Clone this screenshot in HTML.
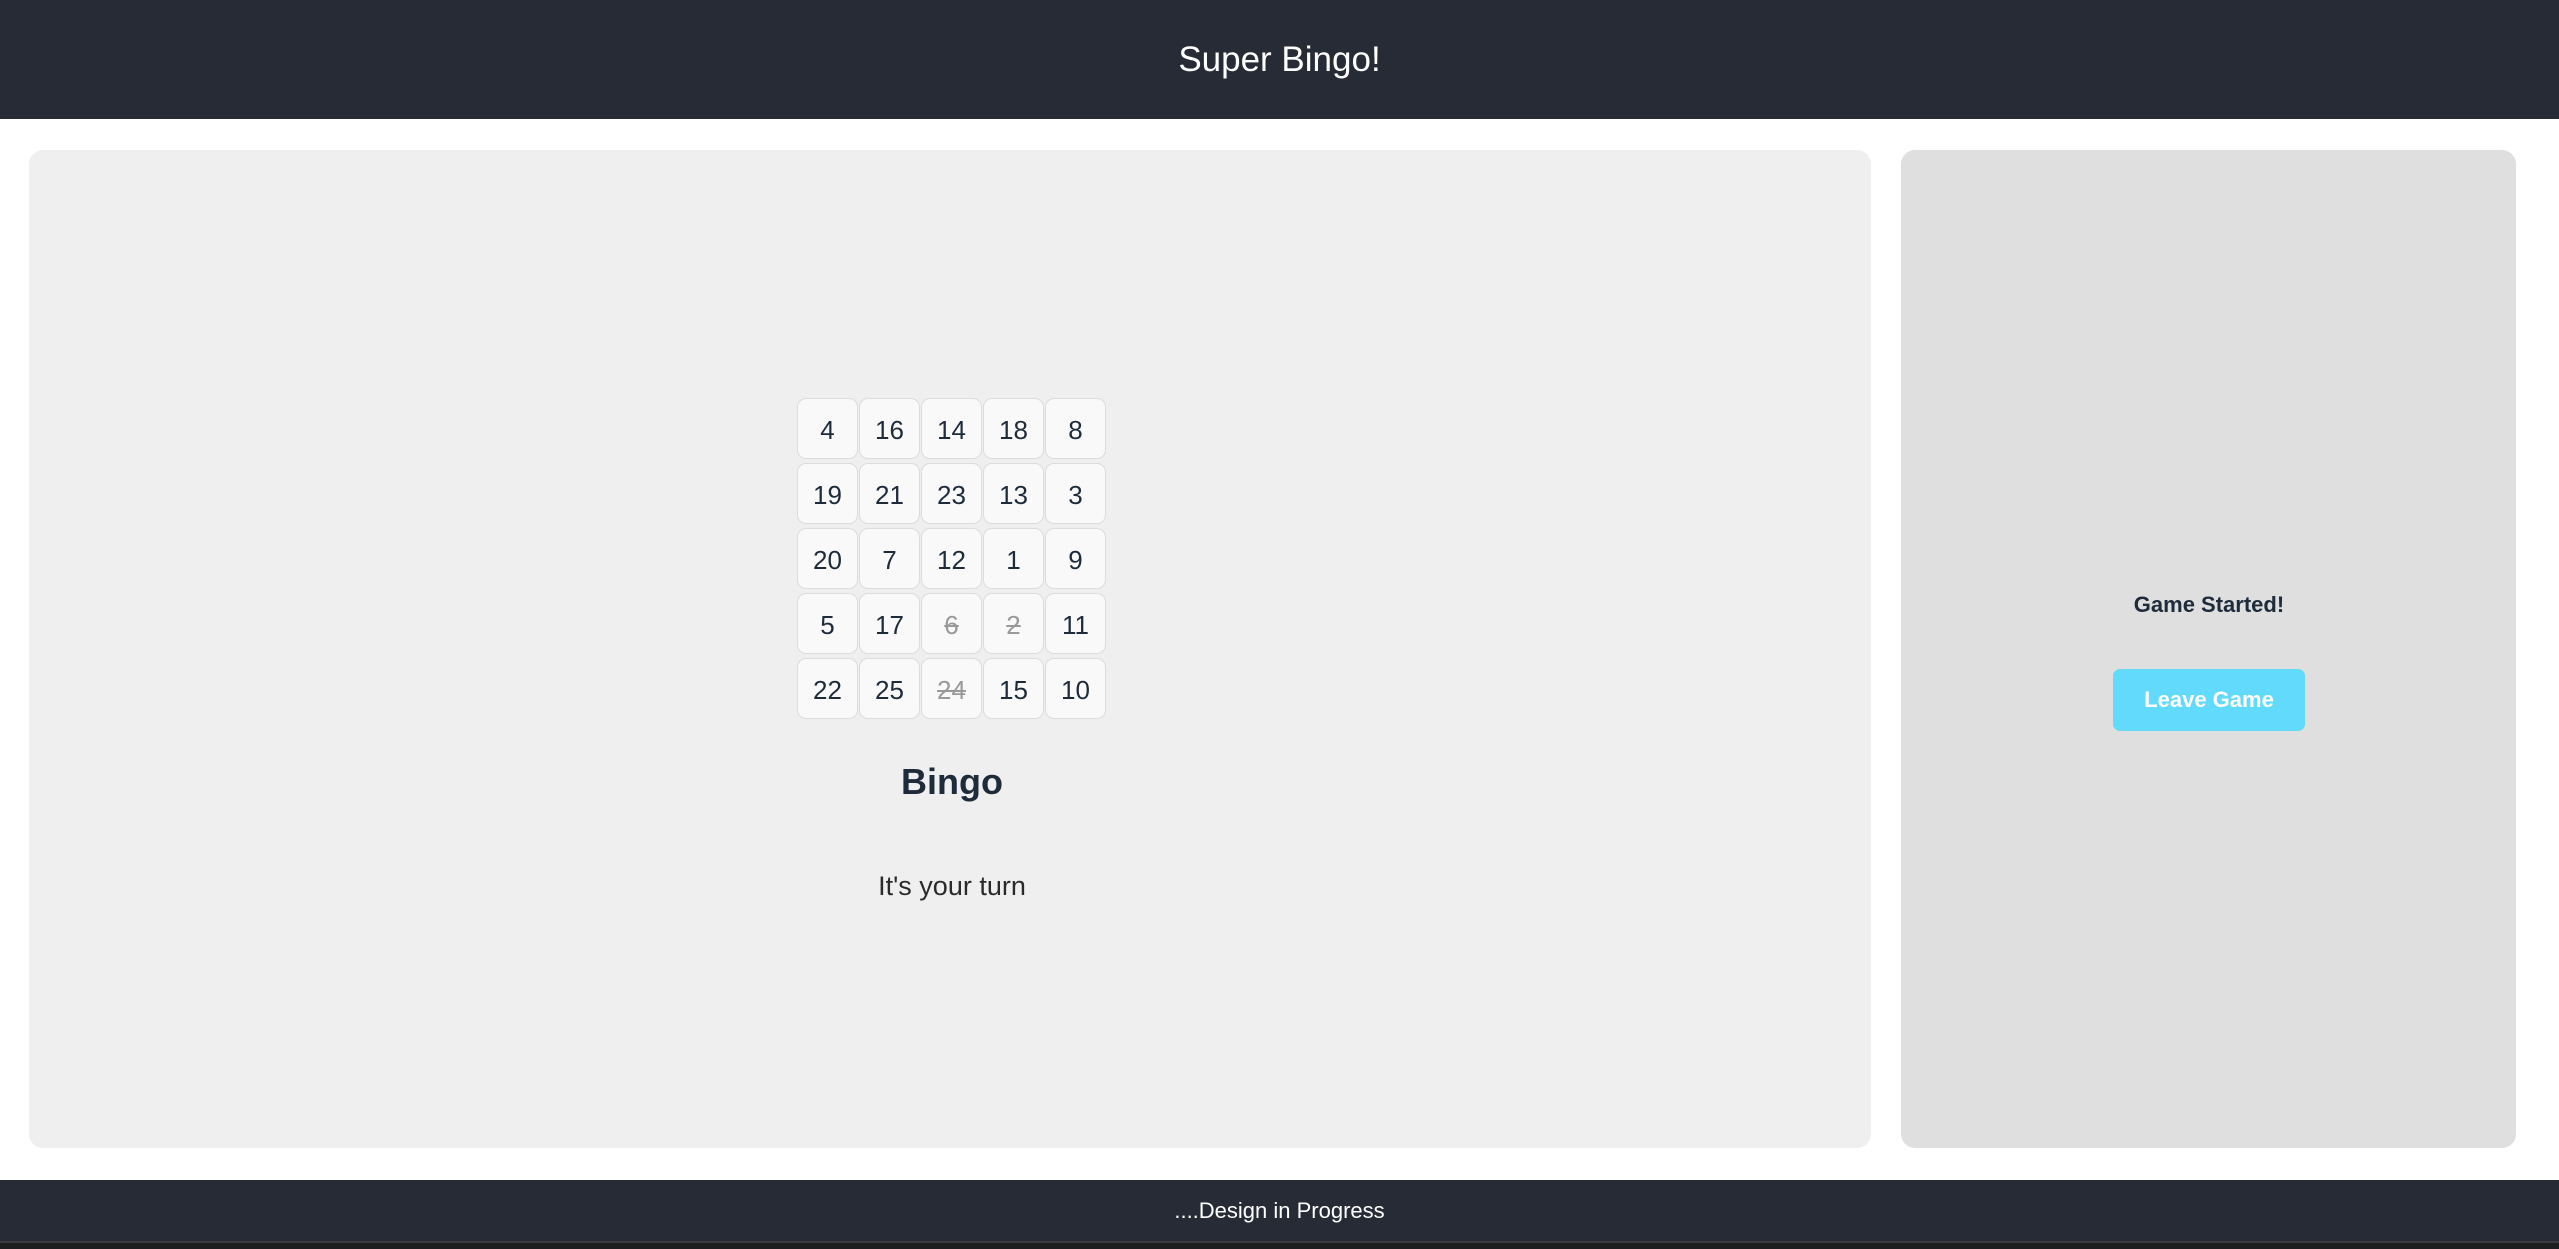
<!DOCTYPE html>
<html><head><meta charset="utf-8"><style>
*{margin:0;padding:0;box-sizing:border-box}
html,body{width:2559px;height:1249px;overflow:hidden;background:#fff;font-family:"Liberation Sans",sans-serif}
.hdr{position:absolute;left:0;top:0;width:2559px;height:119px;background:#272b35;color:#fff;font-size:35px;text-align:center;line-height:119px}
.left{position:absolute;left:29px;top:150px;width:1842px;height:998px;background:#efefef;border-radius:14px}
.right{position:absolute;left:1901px;top:150px;width:615px;height:998px;background:#dfdfdf;border-radius:14px}
.c{position:absolute;width:61px;height:61px;background:#f9f9f9;border:1px solid #dcdcdc;border-radius:9px;color:#1e2b3b;font-size:26px;text-align:center;line-height:59px;padding-top:2px}
.c.x{color:#999;text-decoration:line-through}
.t{position:absolute;text-align:center;color:#1e2b3b}
.foot{position:absolute;left:0;top:1180px;width:2559px;height:61px;background:#272b35;color:#fff;font-size:22px;text-align:center;line-height:61px}
.strip{position:absolute;left:0;top:1241px;width:2559px;height:8px;background:#1d1e20;border-top:2px solid #3a3c40}
.btn{position:absolute;left:2113px;top:669px;width:192px;height:62px;background:#62dafc;border-radius:7px;color:#fff;font-weight:bold;font-size:22px;text-align:center;line-height:62px}
</style></head><body>
<div class="hdr">Super Bingo!</div>
<div class="left"></div>
<div class="right"></div>
<div class="c" style="left:797px;top:398px">4</div><div class="c" style="left:859px;top:398px">16</div><div class="c" style="left:921px;top:398px">14</div><div class="c" style="left:983px;top:398px">18</div><div class="c" style="left:1045px;top:398px">8</div>
<div class="c" style="left:797px;top:463px">19</div><div class="c" style="left:859px;top:463px">21</div><div class="c" style="left:921px;top:463px">23</div><div class="c" style="left:983px;top:463px">13</div><div class="c" style="left:1045px;top:463px">3</div>
<div class="c" style="left:797px;top:528px">20</div><div class="c" style="left:859px;top:528px">7</div><div class="c" style="left:921px;top:528px">12</div><div class="c" style="left:983px;top:528px">1</div><div class="c" style="left:1045px;top:528px">9</div>
<div class="c" style="left:797px;top:593px">5</div><div class="c" style="left:859px;top:593px">17</div><div class="c x" style="left:921px;top:593px">6</div><div class="c x" style="left:983px;top:593px">2</div><div class="c" style="left:1045px;top:593px">11</div>
<div class="c" style="left:797px;top:658px">22</div><div class="c" style="left:859px;top:658px">25</div><div class="c x" style="left:921px;top:658px">24</div><div class="c" style="left:983px;top:658px">15</div><div class="c" style="left:1045px;top:658px">10</div>
<div class="t" style="left:752px;width:400px;top:758px;font-size:36px;font-weight:bold;line-height:48px">Bingo</div>
<div class="t" style="left:752px;width:400px;top:868px;font-size:27px;line-height:36px;color:#2a2a2a">It's your turn</div>
<div class="t" style="left:2009px;width:400px;top:590px;font-size:22px;font-weight:bold;line-height:30px">Game Started!</div>
<div class="btn">Leave Game</div>
<div class="foot">....Design in Progress</div>
<div class="strip"></div>
</body></html>
